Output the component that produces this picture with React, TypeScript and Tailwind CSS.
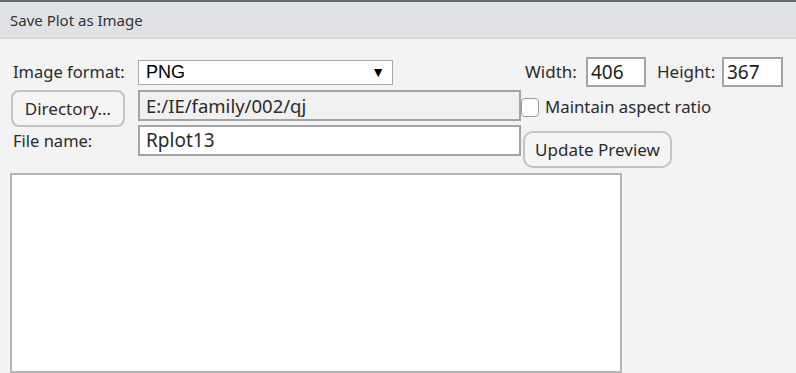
export default function App() {
    const font = { fontFamily: '"Noto Sans", "Open Sans", sans-serif' };
    return (
        <div className="w-[796px] h-[373px] overflow-hidden bg-[#f2f3f2] flex flex-col text-[#2b2b2b]" style={font}>
            <div className="h-[2px] bg-[#5f6a74]" />
            <div className="h-[37px] bg-[#e1e2e5] border-b border-[#d3d5d8] flex items-center pl-[10px] text-[15px] text-[#333]">
                Save Plot as Image
            </div>

            {/* row 1: format + size */}
            <div className="flex items-center mt-[18px] h-[30px]">
                <span className="w-[138px] pl-[13px] text-[16.5px]">Image format:</span>
                <div className="w-[255px] h-[25px] bg-white border border-[#a9a9a9] flex items-center justify-between pl-[7px] pr-[7px] font-['Liberation_Sans',sans-serif] text-[18px] text-black">
                    <span>PNG</span>
                    <span className="text-[14px]">▼</span>
                </div>
                <span className="ml-[132px] w-[61px] text-[17px]">Width:</span>
                <div className="w-[60px] h-[30px] bg-white border-2 border-[#a3a3a3] flex items-center pl-[3px] text-[19px] text-[#222]">406</div>
                <span className="ml-[11px] w-[65px] text-[17px]">Height:</span>
                <div className="w-[61px] h-[30px] bg-white border-2 border-[#a3a3a3] flex items-center pl-[3px] text-[19px] text-[#222]">367</div>
            </div>

            {/* row 2: directory */}
            <div className="flex items-start mt-[3px] h-[35px]">
                <button className="ml-[11px] w-[114px] h-[37px] rounded-[8px] border-2 border-[#c4c4c4] bg-[#f5f5f5] text-[17px] text-[#2b2b2b]">
                    Directory...
                </button>
                <div className="ml-[13px] w-[383px] h-[31px] bg-[#f0f0f0] border-2 border-[#a3a3a3] flex items-center pl-[6px] text-[18.5px] text-[#2b2b2b]">
                    E:/IE/family/002/qj
                </div>
                <div className="mt-[8px] w-[18px] h-[19px] rounded-[4px] border border-[#9a9a9a] bg-white" />
                <span className="ml-[6px] mt-[4px] text-[16.8px]">Maintain aspect ratio</span>
            </div>

            {/* row 3: file name */}
            <div className="flex items-start h-[43px]">
                <span className="w-[138px] pl-[13px] mt-[4px] text-[16.5px]">File name:</span>
                <div className="w-[383px] h-[31px] bg-white border-2 border-[#a3a3a3] flex items-center pl-[6px] text-[19px] text-[#2b2b2b]">
                    Rplot13
                </div>
                <button className="ml-[2px] mt-[6px] w-[149px] h-[37px] rounded-[10px] border-2 border-[#c4c4c4] bg-[#f5f5f5] text-[17px] text-[#2b2b2b]">
                    Update Preview
                </button>
            </div>

            {/* preview area */}
            <div className="ml-[10px] mt-[5px] w-[612px] flex-1 bg-white border-2 border-[#b4b4b4]" />
        </div>
    );
}
